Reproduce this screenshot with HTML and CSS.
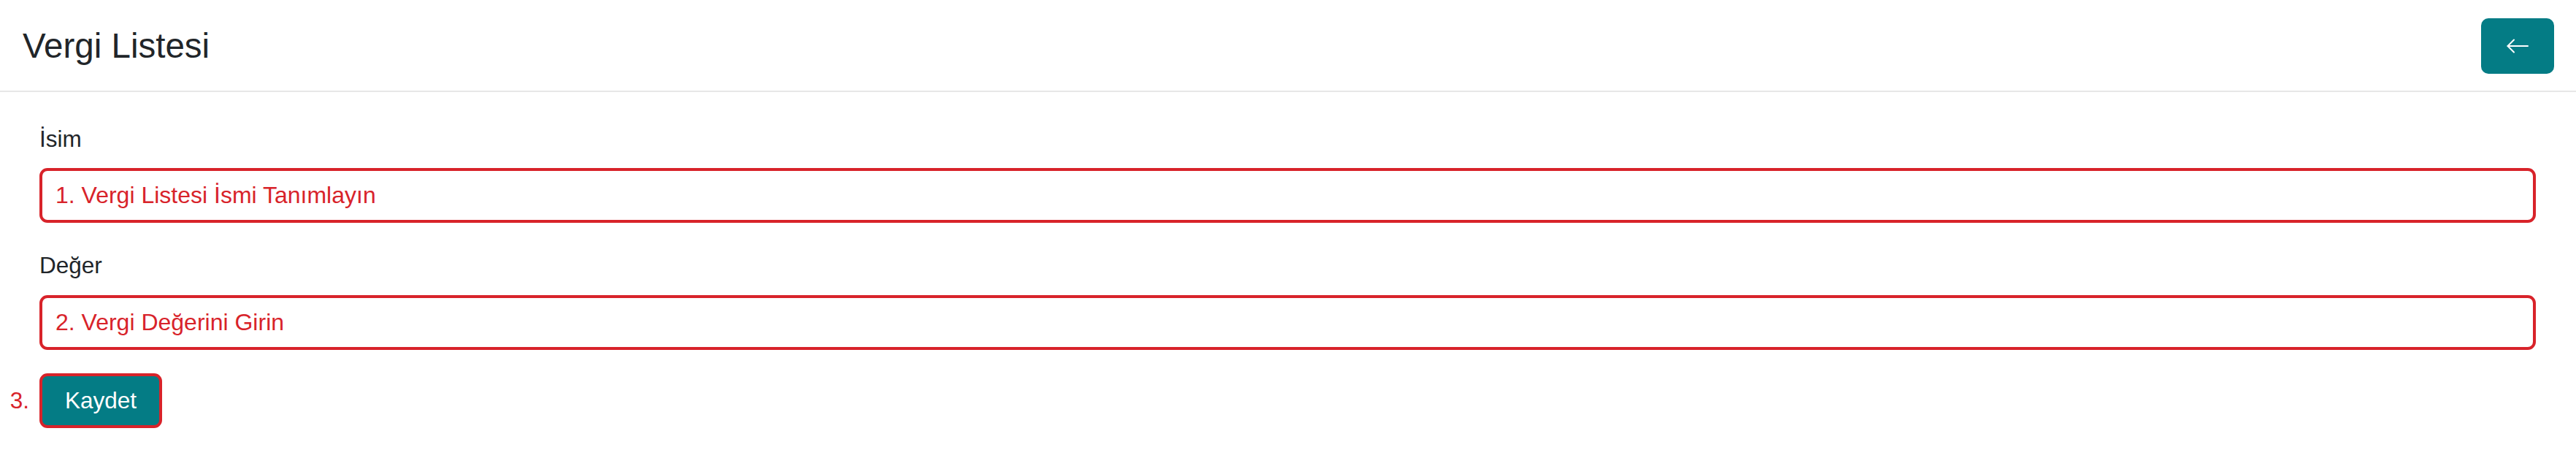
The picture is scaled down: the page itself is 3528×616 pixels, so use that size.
FILE: index.html
```html
<!DOCTYPE html>
<html lang="tr">
<head>
  <meta charset="UTF-8">
  <meta name="viewport" content="width=device-width, initial-scale=1.0">
  <title>Vergi Listesi</title>
  <link rel="stylesheet" href="styles.css">
</head>
<body>
  <div class="header">
    <h1>Vergi Listesi</h1>
    <button class="back-btn" type="button" aria-label="Geri">
      <svg width="30" height="20" viewBox="0 0 30 20" fill="none" stroke="#fff" stroke-width="2" stroke-linecap="round" stroke-linejoin="round">
        <path d="M29 10H1.5"/>
        <path d="M10 1.5L1.5 10L10 18.5"/>
      </svg>
    </button>
  </div>

  <form class="form" onsubmit="return false">
    <div class="group">
      <label for="isim">İsim</label>
      <input type="text" id="isim" class="field" value="1. Vergi Listesi İsmi Tanımlayın">
    </div>

    <div class="group">
      <label for="deger">Değer</label>
      <input type="text" id="deger" class="field" value="2. Vergi Değerini Girin">
    </div>

    <div class="save-row">
      <span class="step">3.</span>
      <button class="save-btn" type="submit">Kaydet</button>
    </div>
  </form>
</body>
</html>
```

FILE: styles.css
```css
body {
  font-family: "Liberation Sans", Arial, sans-serif;
  color: #212529;
  background-color: #fff;
  margin: 0;
}
.header {
  display: flex;
  align-items: center;
  justify-content: space-between;
  height: 124px;
  padding: 0 30px 0 31px;
  border-bottom: 2px solid #e7e7e7;
}
.header h1 {
  margin: 0;
  font-size: 47.5px;
  font-weight: 400;
  line-height: 1.2;
}
.back-btn {
  display: flex;
  align-items: center;
  justify-content: center;
  width: 100px;
  height: 76px;
  margin-top: 1px;
  padding: 0;
  border: none;
  border-radius: 10px;
  background-color: #047c85;
  cursor: pointer;
}
.form {
  padding: 41px 55px 0 54px;
}
.group {
  margin-bottom: 35px;
}
.group + .group {
  margin-bottom: 32px;
}
.group label {
  display: block;
  font-size: 31.5px;
  line-height: 1.5;
  margin-bottom: 16px;
}
.field {
  display: block;
  box-sizing: border-box;
  width: 100%;
  height: 75px;
  padding: 0 18px;
  border: 4px solid #d8232a;
  border-radius: 11px;
  font-family: inherit;
  font-size: 32px;
  color: #d8232a;
  background: #fff;
  outline: none;
}
.save-row {
  position: relative;
  display: inline-block;
}
.step {
  position: absolute;
  right: 100%;
  top: 50%;
  transform: translateY(-50%);
  margin-right: 14px;
  font-size: 31.5px;
  color: #d8232a;
}
.save-btn {
  box-sizing: border-box;
  height: 75px;
  padding: 0 31px;
  border: 4px solid #d8232a;
  border-radius: 11px;
  background-color: #047c85;
  color: #fff;
  font-family: inherit;
  font-size: 31.5px;
  cursor: pointer;
}
```
